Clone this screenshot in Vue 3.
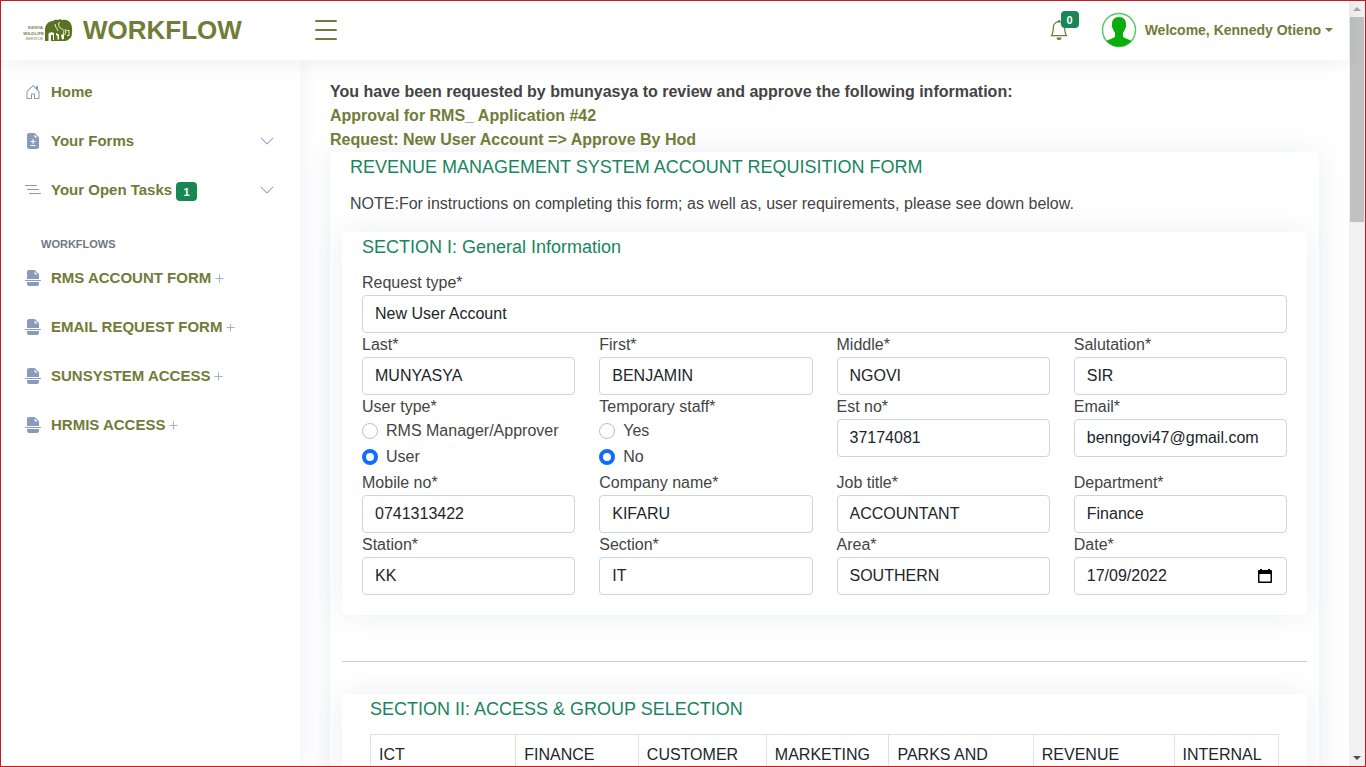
<script setup>
import { ref } from 'vue'

const workflows = ['RMS ACCOUNT FORM', 'EMAIL REQUEST FORM', 'SUNSYSTEM ACCESS', 'HRMIS ACCESS']

const fields = ref([
  { id: 'last', label: 'Last*', value: 'MUNYASYA' },
  { id: 'first', label: 'First*', value: 'BENJAMIN' },
  { id: 'middle', label: 'Middle*', value: 'NGOVI' },
  { id: 'salutation', label: 'Salutation*', value: 'SIR' },
  { id: 'usertype', label: 'User type*', value: 'User', options: ['RMS Manager/Approver', 'User'] },
  { id: 'temporary', label: 'Temporary staff*', value: 'No', options: ['Yes', 'No'] },
  { id: 'estno', label: 'Est no*', value: '37174081' },
  { id: 'email', label: 'Email*', value: 'benngovi47@gmail.com' },
  { id: 'mobile', label: 'Mobile no*', value: '0741313422' },
  { id: 'company', label: 'Company name*', value: 'KIFARU' },
  { id: 'job', label: 'Job title*', value: 'ACCOUNTANT' },
  { id: 'department', label: 'Department*', value: 'Finance' },
  { id: 'station', label: 'Station*', value: 'KK' },
  { id: 'section', label: 'Section*', value: 'IT' },
  { id: 'area', label: 'Area*', value: 'SOUTHERN' },
  { id: 'date', label: 'Date*', value: '17/09/2022', date: true }
])
const requestType = ref('New User Account')

const groups = [
  { name: 'ICT', cls: 'c-ict' },
  { name: 'FINANCE', cls: 'c-fin' },
  { name: 'CUSTOMER', cls: 'c-cus' },
  { name: 'MARKETING', cls: 'c-mar' },
  { name: 'PARKS AND', cls: 'c-par' },
  { name: 'REVENUE', cls: 'c-rev' },
  { name: 'INTERNAL', cls: 'c-int' }
]
</script>

<template>
  <div class="window">
    <div class="page">
      <header class="topbar">
        <a class="brand" href="#">
          <svg class="logo" viewBox="0 0 52 28" aria-hidden="true">
            <g fill="#77825a" font-family="Liberation Sans, sans-serif" font-weight="700" text-anchor="end">
              <text x="22" y="13" font-size="4.4">KENYA</text>
              <text x="23" y="19" font-size="4.4">WILDLIFE</text>
              <text x="22" y="24" font-size="4" font-weight="400">SERVICE</text>
            </g>
            <path fill="#5a7322" d="M24 25V14c0-5 3-9 8-9 1-1 3-1.500 5-1 1-1 3-1 4 0 4-1 8 1 9 4 1 2 1.500 5 1 8 0 4-1 6-3 7-1 1.500-3 2-5 2z" />
            <path fill="#fff" d="M27.500 17.500c2-1.500 4-1.500 5.500-.5V24h-1v-5h-2v6h-2.500zM35 17l3 1.500v5h-1.500V20l-1.500-1zM40 19l3-1v5l-2 .5z" />
            <path fill="none" stroke="#fff" stroke-width=".9" d="M34 8c0 3 2 4 3 7M38.500 6c-2 3 0 6 2.500 7s2 3 1 5M44 13c1 2 1 4-.5 6M45.500 14.500h2.500v5h-2" />
          </svg>
          <span>WORKFLOW</span>
        </a>
        <button class="burger" type="button" aria-label="Toggle menu">
          <svg viewBox="0 0 32 32" aria-hidden="true"><path d="M6 7h20M6 16h20M6 25h20" fill="none" stroke="#717c38" stroke-width="2" stroke-linecap="round" /></svg>
        </button>
        <div class="account">
          <button class="bell" type="button" aria-label="Notifications">
            <svg viewBox="0 0 16 16" fill="#717c38" aria-hidden="true"><path d="M8 16a2 2 0 0 0 2-2H6a2 2 0 0 0 2 2zM8 1.918l-.797.161A4.002 4.002 0 0 0 4 6c0 .628-.134 2.197-.459 3.742-.16.767-.376 1.566-.663 2.258h10.244c-.287-.692-.502-1.490-.663-2.258C12.134 8.197 12 6.628 12 6a4.002 4.002 0 0 0-3.203-3.920L8 1.917zM14.220 12c.223.447.481.801.780 1H1c.299-.199.557-.553.780-1C2.680 10.200 3 6.880 3 6c0-2.420 1.720-4.440 4.005-4.901a1 1 0 1 1 1.990 0A5.002 5.002 0 0 1 13 6c0 .880.320 4.200 1.220 6z" /></svg>
            <span class="badge count">0</span>
          </button>
          <button class="profile" type="button">
            <svg class="avatar" viewBox="0 0 36 36" aria-hidden="true">
              <circle cx="18" cy="18" r="16.500" fill="#fff" stroke="#5cc765" stroke-width="1.500" />
              <path fill="#09ad0d" d="M18 5c4.800 0 7.300 3 7 8 .5.500.3 2.500-.7 3.200-.5 2-1.300 3.300-2.300 4.300v4c1 2 6 2.500 8.300 4.500A16.500 16.500 0 0 1 18 34.500 16.500 16.500 0 0 1 5.700 29c2.300-2 7.300-2.500 8.300-4.500v-4c-1-1-1.800-2.300-2.300-4.300-1-.7-1.200-2.700-.7-3.200C10.700 8 13.200 5 18 5z" />
            </svg>
            <span>Welcome, Kennedy Otieno</span>
            <i class="caret"></i>
          </button>
        </div>
      </header>

      <div class="body">
        <nav class="sidebar">
          <a class="item" href="#">
            <svg viewBox="0 0 16 16" aria-hidden="true"><path d="M8.354 1.146a.5.5 0 0 0-.708 0l-6 6A.5.5 0 0 0 1.500 7.500v7a.5.5 0 0 0 .5.500h4.500a.5.5 0 0 0 .5-.5v-4h2v4a.5.5 0 0 0 .5.500H14a.5.5 0 0 0 .5-.5v-7a.5.5 0 0 0-.146-.354L13 5.793V2.500a.5.5 0 0 0-.5-.5h-1a.5.5 0 0 0-.5.500v1.293L8.354 1.146zM2.500 14V7.707l5.500-5.500 5.500 5.500V14H10v-4a.5.5 0 0 0-.5-.5h-3a.5.5 0 0 0-.5.500v4H2.500z" /></svg>
            <span>Home</span>
          </a>
          <a class="item" href="#">
            <svg viewBox="0 0 16 16" aria-hidden="true"><path d="M9.293 0H4a2 2 0 0 0-2 2v12a2 2 0 0 0 2 2h8a2 2 0 0 0 2-2V4.707A1 1 0 0 0 13.707 4L10 .293A1 1 0 0 0 9.293 0zM9.500 3.500v-2l3 3h-2a1 1 0 0 1-1-1zM8 6a.5.5 0 0 1 .5.500V8H10a.5.5 0 0 1 0 1H8.500v1.500a.5.5 0 0 1-1 0V9H6a.5.5 0 0 1 0-1h1.500V6.500A.5.5 0 0 1 8 6zm-2.500 6.500A.5.5 0 0 1 6 12h4a.5.5 0 0 1 0 1H6a.5.5 0 0 1-.5-.5z" /></svg>
            <span>Your Forms</span>
            <svg class="chevron" viewBox="0 0 16 16" aria-hidden="true"><path d="M1.646 4.646a.5.5 0 0 1 .708 0L8 10.293l5.646-5.647a.5.5 0 0 1 .708.708l-6 6a.5.5 0 0 1-.708 0l-6-6a.5.5 0 0 1 0-.708z" /></svg>
          </a>
          <a class="item" href="#">
            <svg viewBox="0 0 16 16" aria-hidden="true"><path d="M.5 3.500h11M2.500 7.500h11M4.500 11.500h11" fill="none" stroke="#899bbd" stroke-linecap="round" /></svg>
            <span>Your Open Tasks</span>
            <span class="badge tasks">1</span>
            <svg class="chevron" viewBox="0 0 16 16" aria-hidden="true"><path d="M1.646 4.646a.5.5 0 0 1 .708 0L8 10.293l5.646-5.647a.5.5 0 0 1 .708.708l-6 6a.5.5 0 0 1-.708 0l-6-6a.5.5 0 0 1 0-.708z" /></svg>
          </a>
          <h2 class="heading">WORKFLOWS</h2>
          <a v-for="name in workflows" :key="name" class="item" href="#">
            <svg viewBox="0 0 16 16" aria-hidden="true"><path d="M2 9V2a2 2 0 0 1 2-2h5.293a1 1 0 0 1 .707.293L13.707 4a1 1 0 0 1 .293.707V9H2zm7.500-5.500a1 1 0 0 0 1 1h2l-3-3v2zM2 12h12v2a2 2 0 0 1-2 2H4a2 2 0 0 1-2-2v-2zM.5 10a.5.5 0 0 0 0 1h15a.5.5 0 0 0 0-1H.500z" /></svg>
            <span>{{ name }}</span>
            <svg class="plus" viewBox="0 0 16 16" aria-hidden="true"><path d="M8.500 4.500v8M4.500 8.500h8" fill="none" stroke="#a3b1cb" /></svg>
          </a>
        </nav>

        <main class="main">
          <p class="request">
            You have been requested by bmunyasya to review and approve the following information:<br />
            <a href="#">Approval for RMS_ Application #42</a><br />
            <a href="#">Request: New User Account =&gt; Approve By Hod</a>
          </p>
          <form class="card form" @submit.prevent>
            <h1 class="title">REVENUE MANAGEMENT SYSTEM ACCOUNT REQUISITION FORM</h1>
            <p class="note">NOTE:For instructions on completing this form; as well as, user requirements, please see down below.</p>

            <section class="card section">
              <h2 class="title">SECTION I: General Information</h2>
              <div class="grid">
                <div class="field wide">
                  <label for="request">Request type*</label>
                  <input id="request" v-model="requestType" class="control" type="text" />
                </div>
                <template v-for="f in fields" :key="f.id">
                  <fieldset v-if="f.options" class="field">
                    <legend>{{ f.label }}</legend>
                    <label v-for="o in f.options" :key="o" class="choice">
                      <input v-model="f.value" type="radio" :name="f.id" :value="o" />
                      <span>{{ o }}</span>
                    </label>
                  </fieldset>
                  <div v-else class="field">
                    <label :for="f.id">{{ f.label }}</label>
                    <div class="holder">
                      <input :id="f.id" v-model="f.value" class="control" type="text" />
                      <button v-if="f.date" class="picker" type="button" aria-label="Choose date">
                        <svg viewBox="0 0 16 16" aria-hidden="true"><path fill-rule="evenodd" d="M3 1h2v1h6V1h2v1h1a1 1 0 0 1 1 1v11a1 1 0 0 1-1 1H2a1 1 0 0 1-1-1V3a1 1 0 0 1 1-1h1zM2.500 6v7.500h11V6z" /></svg>
                      </button>
                    </div>
                  </div>
                </template>
              </div>
            </section>

            <hr class="rule" />

            <section class="card access">
              <h2 class="title">SECTION II: ACCESS &amp; GROUP SELECTION</h2>
              <table class="groups">
                <tbody>
                  <tr>
                    <td v-for="g in groups" :key="g.name" :class="g.cls">{{ g.name }}</td>
                  </tr>
                </tbody>
              </table>
            </section>
          </form>
        </main>
      </div>
    </div>

    <div class="scrollbar" aria-hidden="true">
      <i class="arrow up"></i>
      <div class="track"><div class="thumb"></div></div>
      <i class="arrow down"></i>
    </div>
  </div>
</template>

<style>
body {
  margin: 0;
  overflow: hidden;
}
</style>

<style scoped>
* {
  box-sizing: border-box;
}
.window {
  display: flex;
  height: 100vh;
  border: 1px solid #c91a22;
  background: #fff;
  color: #444;
  font: 16px/24px "Liberation Sans", Arial, sans-serif;
  overflow: hidden;
}
.page {
  flex: 1;
  min-width: 0;
  display: flex;
  flex-direction: column;
}
button {
  border: 0;
  padding: 0;
  background: none;
  font: inherit;
  color: inherit;
  cursor: pointer;
}
a {
  color: #717c38;
  text-decoration: none;
}
.topbar {
  position: relative;
  z-index: 2;
  flex: none;
  display: flex;
  align-items: center;
  height: 59px;
  padding: 0 16px 2px 20px;
  background: #fff;
  box-shadow: 0 2px 20px rgba(1, 41, 112, 0.08);
}
.brand {
  display: flex;
  align-items: center;
  gap: 10px;
  width: 289px;
  font-size: 26px;
  font-weight: 700;
}
.logo {
  width: 52px;
  height: 28px;
}
.burger svg {
  display: block;
  width: 32px;
  height: 32px;
}
.account {
  display: flex;
  align-items: center;
  gap: 32px;
  margin-left: auto;
}
.bell {
  position: relative;
}
.bell svg {
  display: block;
  width: 20px;
  height: 20px;
}
.badge {
  border-radius: 4px;
  background: #198754;
  color: #fff;
  font-size: 11px;
  font-weight: 700;
  line-height: 12px;
  text-align: center;
}
.count {
  position: absolute;
  left: 12px;
  top: -9px;
  width: 18px;
  padding: 3px 0 2px;
}
.profile {
  display: flex;
  align-items: center;
  color: #717c38;
  font-size: 14px;
  font-weight: 700;
}
.avatar {
  width: 36px;
  height: 36px;
  margin-right: 8px;
}
.caret {
  margin-left: 4px;
  border: 4px solid transparent;
  border-top-color: #717c38;
  border-bottom: 0;
}
.body {
  flex: 1;
  min-height: 0;
  display: flex;
}
.sidebar {
  flex: none;
  width: 299px;
  padding: 10px 20px;
  background: #fff;
  box-shadow: 0 0 20px rgba(1, 41, 112, 0.07);
}
.item {
  display: flex;
  align-items: center;
  height: 44px;
  margin-bottom: 5px;
  padding: 0 4px;
  font-size: 15px;
  font-weight: 700;
}
.item svg {
  flex: none;
  width: 16px;
  height: 16px;
  margin-right: 10px;
  fill: #899bbd;
}
.item .chevron {
  margin: 0 1px 0 auto;
}
.item .plus {
  margin: 0;
}
.tasks {
  width: 21px;
  margin: 2px 0 0 4px;
  padding: 4px 0 3px;
}
.heading {
  margin: 24px 0 4px 20px;
  color: #6d7887;
  font-size: 11px;
  font-weight: 700;
  line-height: 16px;
}
.main {
  flex: 1;
  min-width: 0;
  padding: 20px 30px 0 30px;
}
.request {
  margin: 0;
  font-weight: 700;
}
.card {
  background: #fff;
  border-radius: 5px;
  box-shadow: 0 0 30px rgba(1, 41, 112, 0.08);
}
.form {
  padding: 4px 12px 60px;
}
.title {
  margin: 0;
  color: #17855e;
  font-size: 18px;
  font-weight: 400;
  line-height: 22px;
}
.form > .title,
.note {
  margin-left: 8px;
}
.note {
  margin-top: 14px;
  margin-bottom: 16px;
}
.section {
  padding: 4px 20px 20px;
}
.grid {
  display: grid;
  grid-template-columns: repeat(4, minmax(0, 1fr));
  column-gap: 24px;
  margin-top: 13px;
}
.field {
  min-width: 0;
  margin: 0;
  padding: 0;
  border: 0;
}
.wide {
  grid-column: 1 / -1;
}
.field > label,
legend {
  display: block;
  padding: 0;
  height: 24px;
}
.holder {
  position: relative;
}
.control {
  display: block;
  width: 100%;
  height: 38px;
  padding: 6px 12px;
  border: 1px solid #ced4da;
  border-radius: 4px;
  background: #fff;
  color: #212529;
  font: inherit;
}
.field > .choice {
  display: flex;
  align-items: center;
  gap: 8px;
  margin-bottom: 2px;
}
.choice input {
  appearance: none;
  width: 16px;
  height: 16px;
  margin: 0;
  border: 1px solid #bfbfbf;
  border-radius: 50%;
  background: #fff;
}
.choice input:checked {
  border: 4px solid #0d6efd;
}
.picker {
  position: absolute;
  right: 14px;
  top: 11px;
}
.picker svg {
  display: block;
  width: 16px;
  height: 16px;
}
.rule {
  margin: 46px 0 32px;
  border: 0;
  border-top: 1px solid #ccc;
}
.access {
  padding: 4px 28px 20px;
}
.groups {
  width: 100%;
  margin-top: 14px;
  border-collapse: collapse;
  table-layout: fixed;
  color: #212529;
}
.groups td {
  height: 64px;
  padding: 8px;
  border: 1px solid #dee2e6;
  vertical-align: top;
}
.c-ict { width: 16%; }
.c-fin { width: 13.5%; }
.c-cus { width: 14.1%; }
.c-mar { width: 13.5%; }
.c-par { width: 15.9%; }
.c-rev { width: 15.5%; }
.c-int { width: 11.5%; }
.scrollbar {
  flex: none;
  display: flex;
  flex-direction: column;
  align-items: center;
  width: 16px;
  background: #f1f1f1;
}
.track {
  flex: 1;
  width: 100%;
  padding: 0 1px;
}
.thumb {
  height: 28%;
  background: #c1c1c1;
}
.arrow {
  margin: 6px 0;
  border: 4px solid transparent;
}
.up {
  border-top: 0;
  border-bottom-color: #a3a3a3;
}
.down {
  border-bottom: 0;
  border-top-color: #505050;
}
</style>
